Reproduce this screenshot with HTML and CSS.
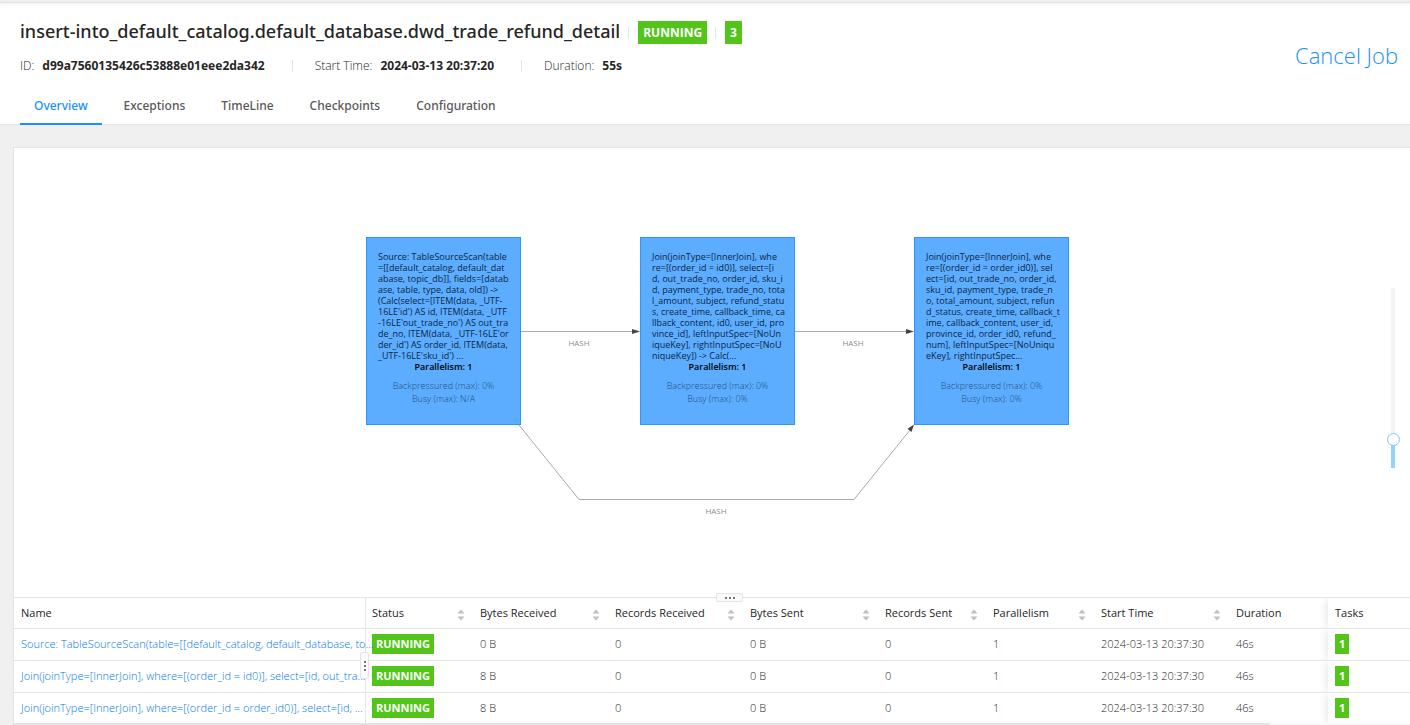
FILE: index.html
```html
<!DOCTYPE html>
<html lang="en">
<head>
<meta charset="utf-8">
<title>Job Overview</title>
<link rel="stylesheet" href="styles.css">
</head>
<body>
<header class="job-header">
  <div class="job-row">
    <div class="job-info">
      <div class="title-line">
        <h1 class="job-title">insert-into_default_catalog.default_database.dwd_trade_refund_detail</h1>
        <span class="divider"></span>
        <span class="badge badge-lg">RUNNING</span>
        <span class="divider"></span>
        <span class="badge badge-lg">3</span>
      </div>
      <dl class="meta">
        <div class="meta-item"><dt>ID:</dt><dd>d99a7560135426c53888e01eee2da342</dd></div>
        <div class="meta-item"><dt>Start Time:</dt><dd>2024-03-13 20:37:20</dd></div>
        <div class="meta-item"><dt>Duration:</dt><dd>55s</dd></div>
      </dl>
    </div>
    <a class="cancel" href="#cancel">Cancel Job</a>
  </div>
  <nav class="tabs">
    <a class="tab active" href="#overview">Overview</a>
    <a class="tab" href="#exceptions">Exceptions</a>
    <a class="tab" href="#timeline">TimeLine</a>
    <a class="tab" href="#checkpoints">Checkpoints</a>
    <a class="tab" href="#configuration">Configuration</a>
  </nav>
</header>

<main class="panel">
  <section class="graph">
    <div class="stage">
      <svg class="edges" width="703" height="290" viewBox="0 0 703 290" aria-hidden="true">
        <g fill="none" stroke="#a9a9a9" stroke-width="1">
          <path d="M155 94.500H267M429 94.500H541M153 188L213 262.500H488L544 193"/>
        </g>
        <g fill="#444">
          <path d="M266 92l8 2.500l-8 2.500zM540 92l8 2.500l-8 2.500zM548 187.500l-2.500 7.500l-4-3.200z"/>
        </g>
      </svg>
      <span class="edge-label label-a">HASH</span>
      <span class="edge-label label-b">HASH</span>
      <span class="edge-label label-c">HASH</span>
      <article class="node node-a">
        <p class="desc">Source: TableSourceScan(table<br>=[[default_catalog, default_dat<br>abase, topic_db]], fields=[datab<br>ase, table, type, data, old]) -&gt;<br>(Calc(select=[ITEM(data, _UTF-<br>16LE'id') AS id, ITEM(data, _UTF<br>-16LE'out_trade_no') AS out_tra<br>de_no, ITEM(data, _UTF-16LE'or<br>der_id') AS order_id, ITEM(data,<br>_UTF-16LE'sku_id') ...</p>
        <p class="parallel">Parallelism: 1</p>
        <p class="load">Backpressured (max): 0%<br>Busy (max): N/A</p>
      </article>
      <article class="node node-b">
        <p class="desc">Join(joinType=[InnerJoin], whe<br>re=[(order_id = id0)], select=[i<br>d, out_trade_no, order_id, sku_i<br>d, payment_type, trade_no, tota<br>l_amount, subject, refund_statu<br>s, create_time, callback_time, ca<br>llback_content, id0, user_id, pro<br>vince_id], leftInputSpec=[NoUn<br>iqueKey], rightInputSpec=[NoU<br>niqueKey]) -&gt; Calc(...</p>
        <p class="parallel">Parallelism: 1</p>
        <p class="load">Backpressured (max): 0%<br>Busy (max): 0%</p>
      </article>
      <article class="node node-c">
        <p class="desc">Join(joinType=[InnerJoin], whe<br>re=[(order_id = order_id0)], sel<br>ect=[id, out_trade_no, order_id,<br>sku_id, payment_type, trade_n<br>o, total_amount, subject, refun<br>d_status, create_time, callback_t<br>ime, callback_content, user_id,<br>province_id, order_id0, refund_<br>num], leftInputSpec=[NoUniqu<br>eKey], rightInputSpec...</p>
        <p class="parallel">Parallelism: 1</p>
        <p class="load">Backpressured (max): 0%<br>Busy (max): 0%</p>
      </article>
    </div>
    <input class="zoom" type="range" min="0" max="100" value="13" aria-label="Zoom">
  </section>

  <section class="lists">
    <button class="grip grip-h" type="button" aria-label="Resize height"><i></i><i></i><i></i></button>
    <div class="names">
      <table>
        <thead><tr><th>Name</th></tr></thead>
        <tbody>
          <tr><td><a href="#v1">Source: TableSourceScan(table=[[default_catalog, default_database, to...</a></td></tr>
          <tr><td><a href="#v2">Join(joinType=[InnerJoin], where=[(order_id = id0)], select=[id, out_tra...</a></td></tr>
          <tr><td><a href="#v3">Join(joinType=[InnerJoin], where=[(order_id = order_id0)], select=[id, ...</a></td></tr>
        </tbody>
      </table>
      <button class="grip grip-v" type="button" aria-label="Resize width"><i></i><i></i><i></i></button>
    </div>
    <div class="stats">
      <table>
        <colgroup><col class="c-s"><col class="c-m"><col class="c-m"><col class="c-m"><col class="c-s"><col class="c-s"><col class="c-m"><col><col class="c-t"></colgroup>
        <thead>
          <tr>
            <th><button class="sort" type="button">Status<svg width="8" height="12" viewBox="0 0 8 12"><path d="M4 0.500L7.500 4.500H0.500zM4 11.500L7.500 7.500H0.500z"/></svg></button></th>
            <th><button class="sort" type="button">Bytes Received<svg width="8" height="12" viewBox="0 0 8 12"><path d="M4 0.500L7.500 4.500H0.500zM4 11.500L7.500 7.500H0.500z"/></svg></button></th>
            <th><button class="sort" type="button">Records Received<svg width="8" height="12" viewBox="0 0 8 12"><path d="M4 0.500L7.500 4.500H0.500zM4 11.500L7.500 7.500H0.500z"/></svg></button></th>
            <th><button class="sort" type="button">Bytes Sent<svg width="8" height="12" viewBox="0 0 8 12"><path d="M4 0.500L7.500 4.500H0.500zM4 11.500L7.500 7.500H0.500z"/></svg></button></th>
            <th><button class="sort" type="button">Records Sent<svg width="8" height="12" viewBox="0 0 8 12"><path d="M4 0.500L7.500 4.500H0.500zM4 11.500L7.500 7.500H0.500z"/></svg></button></th>
            <th><button class="sort" type="button">Parallelism<svg width="8" height="12" viewBox="0 0 8 12"><path d="M4 0.500L7.500 4.500H0.500zM4 11.500L7.500 7.500H0.500z"/></svg></button></th>
            <th><button class="sort" type="button">Start Time<svg width="8" height="12" viewBox="0 0 8 12"><path d="M4 0.500L7.500 4.500H0.500zM4 11.500L7.500 7.500H0.500z"/></svg></button></th>
            <th>Duration</th>
            <th class="tasks">Tasks</th>
          </tr>
        </thead>
        <tbody>
          <tr><td><span class="badge">RUNNING</span></td><td>0 B</td><td>0</td><td>0 B</td><td>0</td><td>1</td><td>2024-03-13 20:37:30</td><td>46s</td><td class="tasks"><span class="badge">1</span></td></tr>
          <tr><td><span class="badge">RUNNING</span></td><td>8 B</td><td>0</td><td>0 B</td><td>0</td><td>1</td><td>2024-03-13 20:37:30</td><td>46s</td><td class="tasks"><span class="badge">1</span></td></tr>
          <tr><td><span class="badge">RUNNING</span></td><td>8 B</td><td>0</td><td>0 B</td><td>0</td><td>1</td><td>2024-03-13 20:37:30</td><td>46s</td><td class="tasks"><span class="badge">1</span></td></tr>
        </tbody>
      </table>
    </div>
    <div class="scrollbar"><div class="scroll-thumb"></div></div>
  </section>
</main>
</body>
</html>
```
FILE: styles.css
```css
* { box-sizing: border-box; }
body {
  margin: 0;
  background: #f0f0f0;
  color: #262626;
  font: 12px/16px "Open Sans", "Noto Sans", sans-serif;
  overflow: hidden;
}
h1, p, dl, dd { margin: 0; }
a { color: #1890ff; text-decoration: none; }
button { border: 0; background: none; padding: 0; color: inherit; font: inherit; }

.job-header {
  margin-top: 2px;
  background: #fff;
  border-top: 1px solid #e4e4e4;
  border-bottom: 1px solid #e4e4e4;
  box-shadow: inset 0 3px 3px -2px #eee;
}
.job-row { display: flex; justify-content: space-between; align-items: center; padding: 15px 12px 0 20px; }
.title-line { display: flex; align-items: center; height: 26px; }
.job-title { font-family: "Noto Sans", sans-serif; font-size: 18px; font-weight: 500; line-height: 26px; }
.divider { width: 1px; height: 12px; margin: 4px 9px 0 8px; background: #e4e4e4; }
.badge {
  display: inline-block;
  padding: 0 4px;
  background: #52c41a;
  color: #fff;
  font-size: 11px;
  font-weight: 700;
  line-height: 20px;
  vertical-align: middle;
}
.badge-lg { margin-top: 2px; padding: 0 5px; font-size: 12px; line-height: 23px; }
.meta { display: flex; margin-top: 12px; }
.meta-item { display: flex; gap: 8px; line-height: 20px; }
.meta-item + .meta-item { margin-left: 27px; padding-left: 23px; background: linear-gradient(#e4e4e4, #e4e4e4) 0 4px / 1px 12px no-repeat; }
dt { color: #262626; font-weight: 300; }
dd { font-family: "Noto Sans", sans-serif; font-weight: 700; }
.cancel { font-size: 22px; font-weight: 300; line-height: 30px; margin-top: 16px; }
.tabs { display: flex; gap: 8px; padding: 11px 20px 0; margin-bottom: -1px; }
.tab { padding: 10px 14px 8px; color: #595959; font-family: "Noto Sans", sans-serif; font-weight: 500; line-height: 18px; border-bottom: 2px solid transparent; }
.tab.active { color: #1890ff; border-color: #1890ff; }

.panel { margin: 22px 0 0 13px; background: #fff; border: 1px solid #e4e4e4; border-right: 0; }
.graph { position: relative; height: 449px; }
.stage { position: absolute; left: calc(50% - 346px); top: 89px; width: 703px; height: 290px; }
.edges { display: block; }
.edge-label { position: absolute; width: 40px; color: #8c8c8c; font-size: 8px; line-height: 12px; text-align: center; }
.label-a { left: 193px; top: 100px; }
.label-b { left: 467px; top: 100px; }
.label-c { left: 330px; top: 268px; }
.node {
  position: absolute;
  top: 0;
  width: 155px;
  height: 188px;
  padding: 13px 11px 0;
  background: #5cadff;
  border: 1px solid #2898fc;
  color: #0e263f;
  white-space: nowrap;
}
.node-a { left: 0; }
.node-b { left: 274px; }
.node-c { left: 548px; }
.desc { font-size: 9px; line-height: 11px; }
.parallel { color: #000; font-size: 9px; font-weight: 600; line-height: 11px; text-align: center; }
.load { margin-top: 7px; color: #24507c; font-size: 9px; font-weight: 300; line-height: 13px; text-align: center; }

.zoom {
  position: absolute;
  top: 140px;
  right: 10px;
  width: 14px;
  height: 180px;
  margin: 0;
  appearance: none;
  background: linear-gradient(to top, #91d5ff 28px, #f5f5f5 28px) center / 4px 100% no-repeat;
  writing-mode: vertical-lr;
  direction: rtl;
}
.zoom::-webkit-slider-thumb { appearance: none; width: 13px; height: 13px; background: #fff; border: 1px solid #7cc8fb; border-radius: 50%; }

.lists { position: relative; display: grid; grid-template-columns: 352px 1fr; border-top: 1px solid #e4e4e4; }
.names { position: relative; border-right: 1px solid #e4e4e4; }
table { width: 100%; border-collapse: separate; border-spacing: 0; table-layout: fixed; }
th, td { height: 32px; padding: 0 0 0 6px; border-bottom: 1px solid #e4e4e4; text-align: left; white-space: nowrap; }
th { height: 31px; font-weight: 400; font-size: 11px; }
td { padding-bottom: 1px; color: #262626; font-size: 11px; font-weight: 300; }
td a { color: #0078f0; }
.names th, .names td { padding-left: 7px; }
.c-s { width: 108px; }
.c-m { width: 135px; }
.c-t { width: 82px; }
.stats .tasks { padding-left: 7px; box-shadow: -4px 0 8px -2px #e8e8e8; clip-path: inset(0 0 0 -12px); }
.sort { display: flex; justify-content: space-between; align-items: center; width: 100%; padding-right: 9px; }
.sort svg { fill: #bfbfbf; margin-top: 3px; }
.grip { position: absolute; z-index: 1; display: flex; gap: 2px; align-items: center; justify-content: center; background: #fafafa; border: 1px solid #e4e4e4; border-radius: 2px; }
.grip i { width: 2px; height: 2px; background: #777; }
.grip-h { left: calc(50% + 4px); top: -5px; width: 27px; height: 9px; }
.grip-v { right: -4px; top: 54px; width: 9px; height: 27px; flex-direction: column; }
.scrollbar { grid-column: 1 / -1; height: 8px; margin-top: -2px; background: #f8f8f8; z-index: 1; }
.scroll-thumb { width: 90%; height: 8px; background: #e4e4e4; }
```
